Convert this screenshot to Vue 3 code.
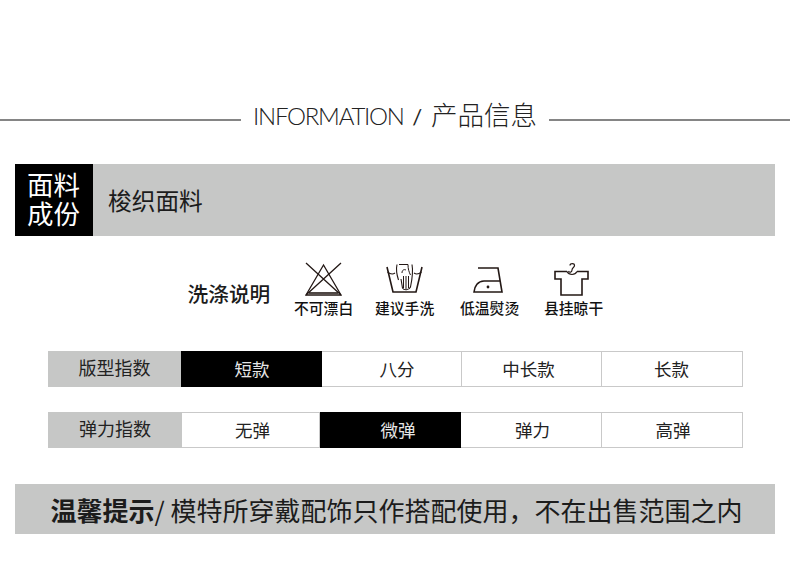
<script setup>
const cares = [
  { key: 'bleach', label: '不可漂白' },
  { key: 'hand', label: '建议手洗' },
  { key: 'iron', label: '低温熨烫' },
  { key: 'hang', label: '县挂晾干' }
]
const tables = [
  {
    label: '版型指数',
    widths: [133, 141, 140, 140, 141],
    cells: [
      { text: '短款', shift: 2 },
      { text: '八分', shift: 11 },
      { text: '中长款', shift: -6 },
      { text: '长款', shift: -1 }
    ],
    active: 0
  },
  {
    label: '弹力指数',
    widths: [134, 138, 141, 141, 141],
    cells: [
      { text: '无弹', shift: 4 },
      { text: '微弹', shift: 16 },
      { text: '弹力', shift: 3 },
      { text: '高弹', shift: 2 }
    ],
    active: 1
  }
]
const columns = (w) => ({ gridTemplateColumns: w.map((n) => n + 'px').join(' ') })
const nudge = (n) => ({ paddingLeft: Math.max(n, 0) + 'px', paddingRight: Math.max(-n, 0) + 'px' })
</script>

<template>
  <div class="page">
    <header class="heading">
      <span class="rule"></span>
      <h1 class="title"><span class="latin">INFORMATION</span><span class="slash"> / </span>产品信息</h1>
      <span class="rule"></span>
    </header>

    <section class="fabric">
      <div class="fabric-tag">面料<br />成份</div>
      <div class="fabric-name">梭织面料</div>
    </section>

    <section class="care">
      <div class="care-title">洗涤说明</div>
      <div class="care-grid">
        <div v-for="c in cares" :key="c.key" class="care-item">
          <svg class="care-icon" viewBox="0 0 60 36" fill="none" stroke="#231815" stroke-width="1.3">
            <g v-if="c.key === 'bleach'">
              <path d="M12 1 L47 33 M47 1 L12 33" />
              <path d="M29.5 3 L12 33 H47 Z" />
              <path d="M15 31 H44" stroke-width="1.6" />
            </g>
            <g v-else-if="c.key === 'hand'">
              <path d="M12 5 L18 30 H41 L47 5" stroke-width="1.6" />
              <path d="M12.500 10 C15 12 18 12.500 20 11 M46.500 10 C44 12 41 12.500 39 11" stroke-width="1.1" />
              <path d="M22 2.500 C21 7 21.500 12 23.500 18 M37 2.500 C38 8 37 18 35.500 25 C34 28.500 29 28.500 27.500 26 L26 17" stroke-width="1.1" />
              <path d="M24 2.500 H33 C33 7 34 10 35.500 13 M27 11 C27 8 29 7 31 8" stroke-width="1" />
              <path d="M28.500 14 V26 M31 14 V27 M33.500 14 V26" stroke-width="1" />
            </g>
            <g v-else-if="c.key === 'iron'">
              <path d="M18 6 H38 L42 30 H14 C14.500 24 18 19 24 19 H39.500" stroke-width="1.6" />
              <circle cx="28" cy="25" r="1.400" fill="#231815" stroke="none" />
            </g>
            <g v-else>
              <path d="M23 9.500 H11 V17 H17 V33 H38 V17 H44 V9.500 H33" stroke-width="1.600" />
              <path d="M23 9.500 C25 13.500 31 13.500 33 9.500" stroke-width="1.200" />
              <path d="M26 3.500 C26 1 30.500 1 30.500 3.500 C30.500 5.500 28 5.500 28 8 C28 10.500 25.500 11 24.500 9" stroke-width="1.200" />
            </g>
          </svg>
          <div class="care-label">{{ c.label }}</div>
        </div>
      </div>
    </section>

    <section v-for="t in tables" :key="t.label" class="index" :style="columns(t.widths)">
      <div class="index-label">{{ t.label }}</div>
      <div
        v-for="(cell, i) in t.cells"
        :key="cell.text"
        class="index-cell"
        :class="{ active: i === t.active }"
        :style="nudge(cell.shift)"
      >{{ cell.text }}</div>
    </section>

    <footer class="notice">
      <strong>温馨提示</strong>/ 模特所穿戴配饰只作搭配使用，不在出售范围之内
    </footer>
  </div>
</template>

<style>
html, body { margin: 0; background: #fff; }
</style>

<style scoped>
.page {
  width: 790px;
  height: 572px;
  overflow: hidden;
  background: #fff;
  color: #1c1c1c;
  font-family: "Noto Sans CJK SC", "Liberation Sans", sans-serif;
  padding-top: 96px;
  box-sizing: border-box;
}
.heading {
  height: 40px;
  display: flex;
  align-items: center;
  gap: 12px;
}
.rule {
  flex: 1;
  height: 2px;
  margin-top: 7px;
  background: #858585;
}
.title {
  margin: 0;
  font-size: 26.500px;
  font-weight: 300;
  line-height: 38px;
  margin-bottom: 2px;
  white-space: nowrap;
  color: #222;
}
.latin,
.slash {
  font-family: "Lato", sans-serif;
  font-size: 24px;
  font-weight: 300;
}
.latin {
  letter-spacing: -1.25px;
}
.slash {
  word-spacing: 3px;
  font-weight: 400;
  font-size: 22px;
}
.fabric {
  margin: 28px 15px 0;
  height: 72px;
  display: flex;
  background: #c6c7c6;
}
.fabric-tag {
  width: 78px;
  background: #000;
  color: #fff;
  font-size: 26.500px;
  line-height: 29px;
  text-align: center;
  padding: 5px 1px 0 0;
  box-sizing: border-box;
}
.fabric-name {
  margin-left: 15px;
  font-size: 23.700px;
  line-height: 73px;
}
.care {
  margin-top: 25px;
  padding-left: 187.500px;
  height: 58px;
  display: flex;
  align-items: center;
}
.care-title {
  width: 106.500px;
  font-size: 20.700px;
  font-weight: 500;
  line-height: 28px;
  margin-top: 5px;
}
.care-grid {
  display: grid;
  grid-template-columns: 81px 85px 84px 60px;
}
.care-item {
  width: 60px;
}
.care-icon {
  display: block;
  width: 60px;
  height: 36px;
}
.care-label {
  font-size: 14.800px;
  font-weight: 500;
  line-height: 20px;
  white-space: nowrap;
  color: #111;
}
.index {
  margin: 0 0 25px 48px;
  height: 36px;
  display: grid;
  width: 695px;
}
.care + .index {
  margin-top: 32px;
}
.index-label {
  background: #c6c7c6;
  font-size: 18px;
  line-height: 33px;
  text-align: center;
  color: #222;
}
.index-cell {
  border: 1px solid #c9c9c9;
  border-left: 0;
  font-size: 17.500px;
  line-height: 33px;
  text-align: center;
  color: #222;
  background: #fff;
  box-sizing: border-box;
}
.index-cell.active {
  background: #000;
  color: #e6e6e6;
  border-color: #000;
}
.notice {
  margin: 36px 15px 0;
  height: 50px;
  background: #c6c7c6;
  font-size: 26px;
  line-height: 51px;
  padding-left: 35.500px;
  white-space: nowrap;
  color: #1c1c1c;
}
.notice strong {
  font-weight: 700;
}
</style>
